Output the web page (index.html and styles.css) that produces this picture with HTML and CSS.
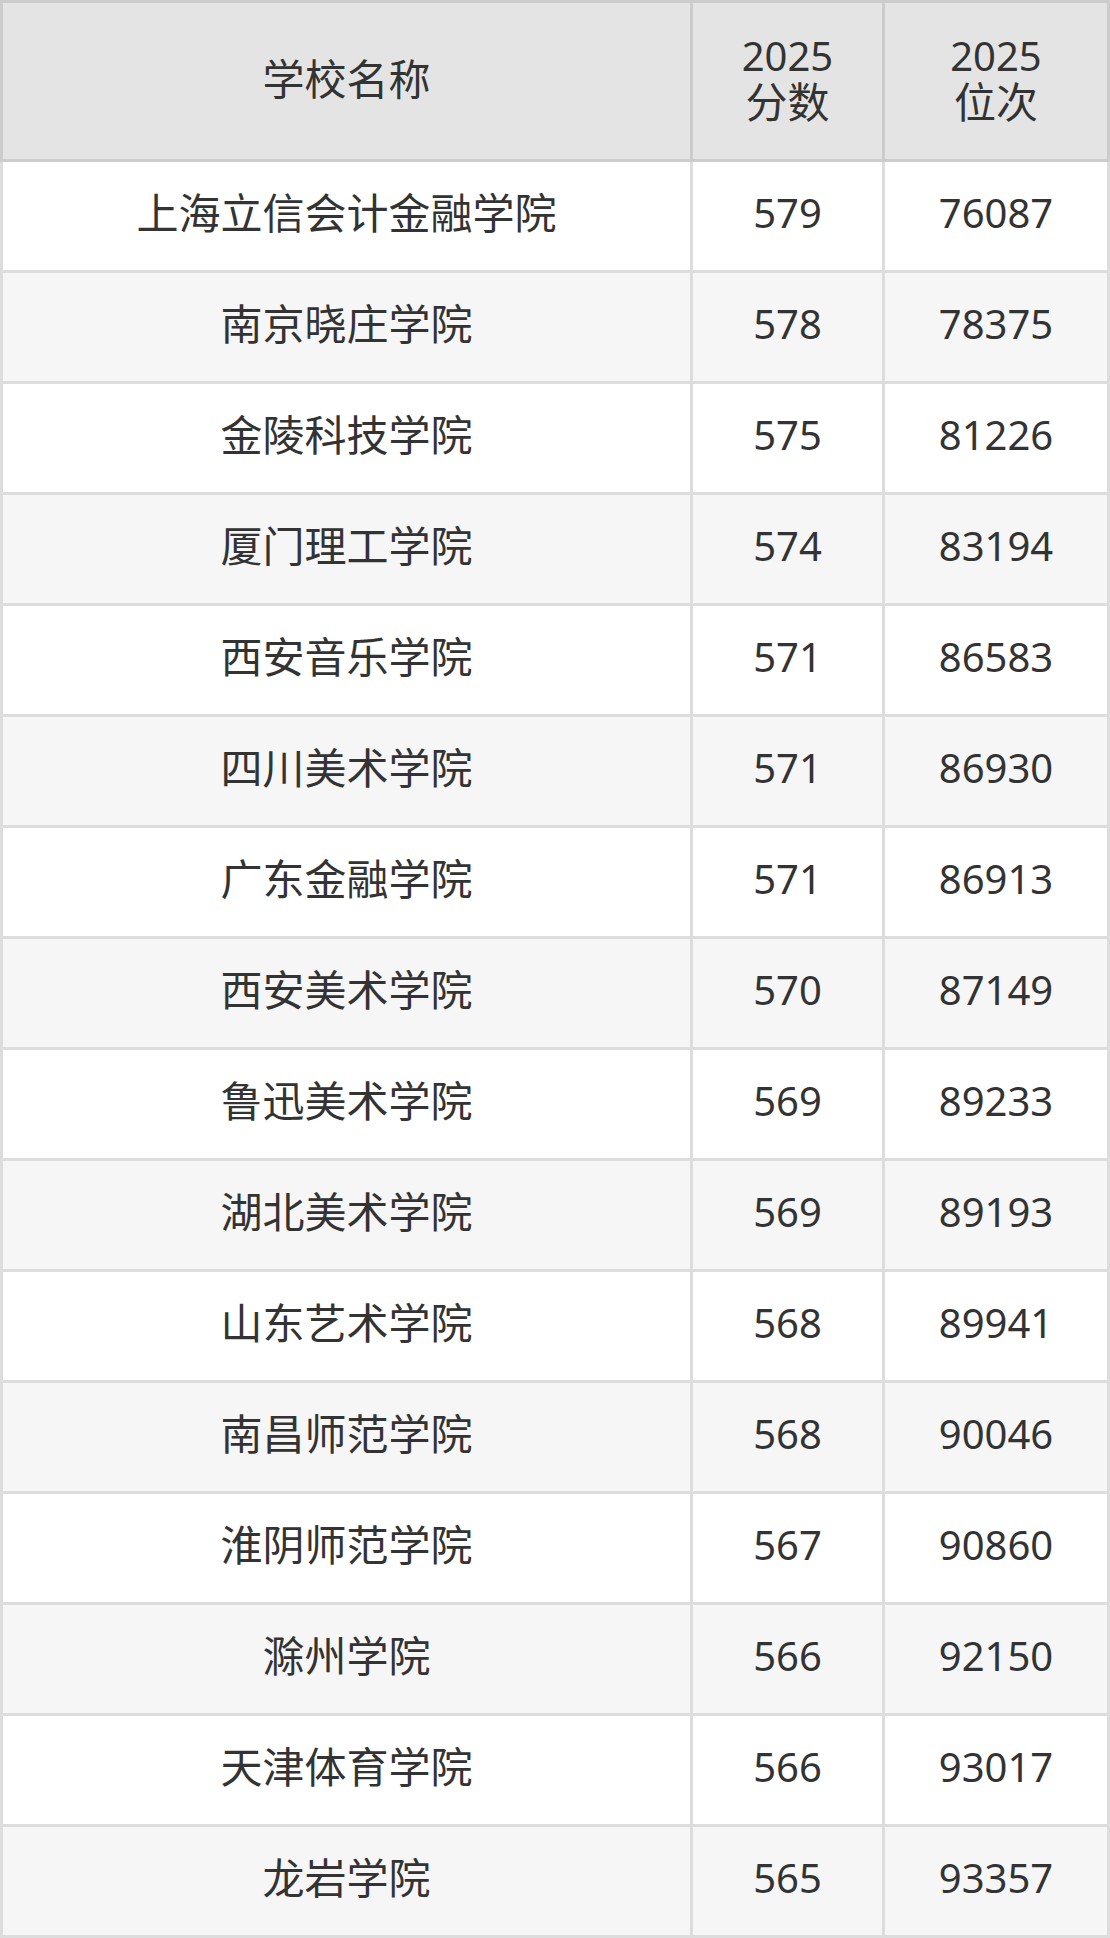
FILE: index.html
```html
<!DOCTYPE html>
<html lang="zh">
<head>
<meta charset="utf-8">
<link rel="stylesheet" href="styles.css">
</head>
<body>
<table class="rank-table">
  <colgroup>
    <col class="col-name">
    <col class="col-score">
    <col class="col-rank">
  </colgroup>
  <thead>
    <tr class="head-row">
      <th class="cjk">学校名称</th>
      <th><span class="num">2025</span><br><span class="cjk">分数</span></th>
      <th><span class="num">2025</span><br><span class="cjk">位次</span></th>
    </tr>
  </thead>
  <tbody>
    <tr><td class="cjk">上海立信会计金融学院</td><td class="num">579</td><td class="num">76087</td></tr>
    <tr><td class="cjk">南京晓庄学院</td><td class="num">578</td><td class="num">78375</td></tr>
    <tr><td class="cjk">金陵科技学院</td><td class="num">575</td><td class="num">81226</td></tr>
    <tr><td class="cjk">厦门理工学院</td><td class="num">574</td><td class="num">83194</td></tr>
    <tr><td class="cjk">西安音乐学院</td><td class="num">571</td><td class="num">86583</td></tr>
    <tr><td class="cjk">四川美术学院</td><td class="num">571</td><td class="num">86930</td></tr>
    <tr><td class="cjk">广东金融学院</td><td class="num">571</td><td class="num">86913</td></tr>
    <tr><td class="cjk">西安美术学院</td><td class="num">570</td><td class="num">87149</td></tr>
    <tr><td class="cjk">鲁迅美术学院</td><td class="num">569</td><td class="num">89233</td></tr>
    <tr><td class="cjk">湖北美术学院</td><td class="num">569</td><td class="num">89193</td></tr>
    <tr><td class="cjk">山东艺术学院</td><td class="num">568</td><td class="num">89941</td></tr>
    <tr><td class="cjk">南昌师范学院</td><td class="num">568</td><td class="num">90046</td></tr>
    <tr><td class="cjk">淮阴师范学院</td><td class="num">567</td><td class="num">90860</td></tr>
    <tr><td class="cjk">滁州学院</td><td class="num">566</td><td class="num">92150</td></tr>
    <tr><td class="cjk">天津体育学院</td><td class="num">566</td><td class="num">93017</td></tr>
    <tr><td class="cjk">龙岩学院</td><td class="num">565</td><td class="num">93357</td></tr>
  </tbody>
</table>
</body>
</html>
```
FILE: styles.css
```css
html, body {
  margin: 0;
  padding: 0;
  background: #ffffff;
}

.rank-table {
  width: 1110px;
  table-layout: fixed;
  border-collapse: collapse;
  font-family: "Noto Sans", "Noto Sans CJK SC", sans-serif;
  font-size: 41px;
  color: #333333;
}

.col-name { width: 690px; }
.col-score { width: 192px; }
.col-rank { width: 225px; }

.rank-table th,
.rank-table td {
  padding: 0;
  text-align: center;
  vertical-align: middle;
  font-weight: normal;
}

.rank-table th {
  background: #e4e4e4;
  border: 3px solid #cccccc;
  line-height: 46px;
  padding-bottom: 5px;
}

.rank-table td {
  border: 3px solid #dddddd;
  line-height: 50px;
  padding-bottom: 7px;
}

.cjk { font-size: 42px; }
.num { font-size: 40px; }

.head-row { height: 159px; }

.rank-table tbody tr { height: 111px; }

.rank-table tbody tr:nth-child(even) td {
  background: #f6f6f6;
}
```
